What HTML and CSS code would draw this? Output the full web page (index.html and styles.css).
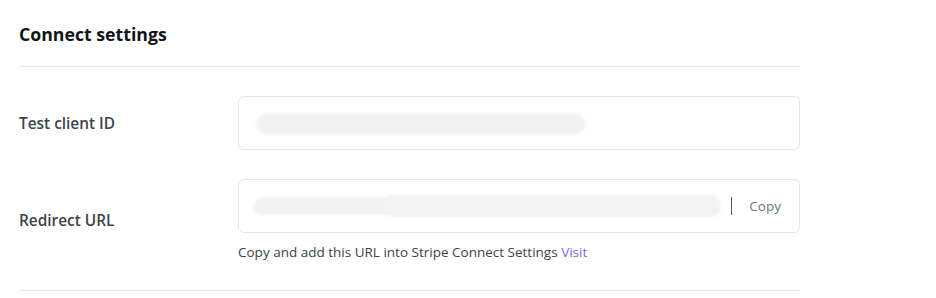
FILE: index.html
```
<!DOCTYPE html>
<html>
<head>
<meta charset="utf-8">
<link rel="stylesheet" href="styles.css">
</head>
<body>
<div class="panel">
  <h2 class="title">Connect settings</h2>
  <div class="divider"></div>
  <div class="row">
    <div class="label">Test client ID</div>
    <div class="field">
      <div class="input">
        <div class="blur blur-one"></div>
      </div>
    </div>
  </div>
  <div class="row">
    <div class="label">Redirect URL</div>
    <div class="field">
      <div class="input">
        <div class="blur-group">
          <div class="blur blur-a"></div>
          <div class="blur blur-b"></div>
        </div>
        <span class="sep"></span>
        <span class="copy">Copy</span>
      </div>
      <p class="help">Copy and add this URL into Stripe Connect Settings <a class="link" href="#">Visit</a></p>
    </div>
  </div>
  <div class="divider bottom"></div>
</div>
</body>
</html>
```
FILE: styles.css
```
* { box-sizing: border-box; }
body {
  margin: 0;
  background: #ffffff;
  font-family: "Open Sans", "Noto Sans", sans-serif;
}
.panel {
  width: 800px;
  padding-left: 19px;
}
.title {
  margin: 0;
  padding-top: 22px;
  height: 66px;
  font-size: 17.7px;
  line-height: 24px;
  font-weight: 700;
  color: #101517;
}
.divider {
  height: 1px;
  background: #e4e7ee;
}
.row {
  display: flex;
  align-items: center;
  margin-top: 29px;
}
.label {
  width: 219px;
  flex: none;
  font-size: 15.4px;
  font-weight: 600;
  color: #3c434a;
}
.field {
  flex: 1;
}
.input {
  height: 54px;
  border: 1px solid #e4e7ee;
  border-radius: 6px;
  display: flex;
  align-items: center;
  padding: 0 18px 0 14px;
}
.blur {
  height: 20px;
  border-radius: 10px;
  background: #f2f2f2;
  filter: blur(1.5px);
}
.blur-one {
  width: 330px;
  margin-left: 3px;
  margin-top: 2px;
}
.blur-group {
  display: flex;
  align-items: center;
  flex: 1;
}
.blur-a {
  width: 140px;
  height: 18px;
  border-radius: 9px 0 0 9px;
}
.blur-b {
  width: 338px;
  height: 22px;
  margin-left: -10px;
  border-radius: 11px;
  background: #f3f3f3;
}
.sep {
  width: 1px;
  height: 18px;
  background: #50575e;
  margin: 0 17px 0 8px;
}
.copy {
  font-size: 13.5px;
  color: #6b7785;
}
.help {
  margin: 10px 0 0;
  font-size: 13.5px;
  line-height: 18px;
  color: #3c434a;
}
.link {
  color: #7b68ee;
  text-decoration: none;
}
.bottom {
  margin-top: 29px;
}
```
